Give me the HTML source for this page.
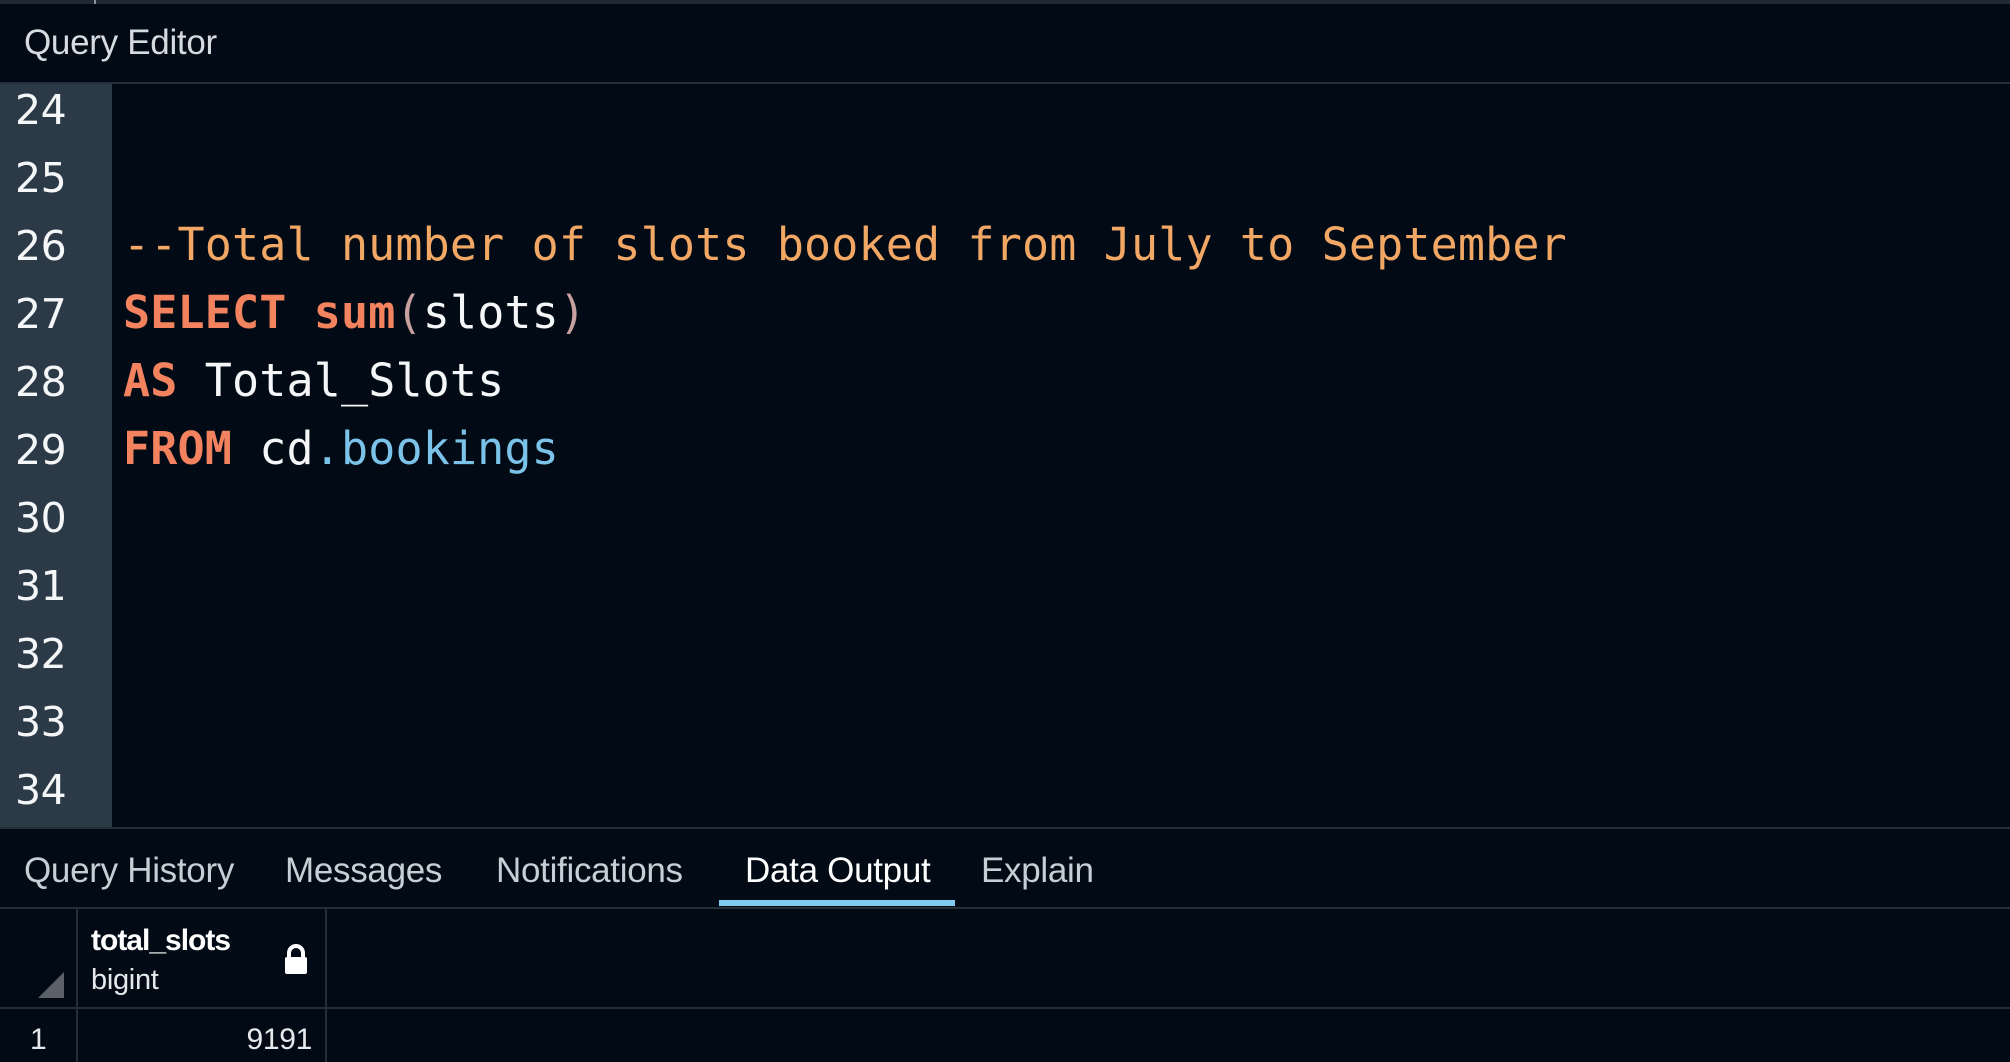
<!DOCTYPE html>
<html><head><meta charset="utf-8"><style>
*{margin:0;padding:0;box-sizing:border-box}
body{width:2010px;height:1062px;background:#020b15;overflow:hidden;position:relative;font-family:"Liberation Sans",sans-serif;color:#dfe3e8}
.abs{position:absolute}
.topbar{left:0;top:0;width:2010px;height:4px;background:#1e2a36}
.hdr{left:24px;top:23px;font-size:35px;color:#d6dbe1;letter-spacing:-0.3px}
.hline{left:0;width:2010px;height:2px;background:#232e39}
.gutter{left:0;top:84px;width:112px;height:743px;background:#2c3a48}
.ln{left:15px;font-family:"DejaVu Sans",sans-serif;font-size:41px;color:#f4f6f8;line-height:68px;letter-spacing:-0.5px}
.code{left:123px;font-family:"DejaVu Sans Mono","Liberation Mono",monospace;font-size:45px;line-height:68px;color:#f4f6f8;white-space:pre;letter-spacing:0.15px}
.cm{color:#f2a765}.kw{color:#f3825e;font-weight:bold}.pa{color:#c9a0a0}.bl{color:#7cc3ea}
.tab{top:851px;font-size:35px;color:#c7ced6;letter-spacing:-0.3px}
</style></head><body>
<div class="abs topbar"></div>
<div class="abs" style="left:94px;top:0;width:2px;height:4px;background:#8a939c"></div>
<div class="abs hdr">Query Editor</div>
<div class="abs hline" style="top:82px"></div>
<div class="abs gutter"></div>
<div class="abs" style="left:0;top:84px;width:2010px;height:743px;overflow:hidden">
<div class="abs ln" style="top:-8px">24<br>25<br>26<br>27<br>28<br>29<br>30<br>31<br>32<br>33<br>34</div>
<div class="abs code" style="top:-9px">

<span class="cm">--Total number of slots booked from July to September</span>
<span class="kw">SELECT</span> <span class="kw">sum</span><span class="pa">(</span>slots<span class="pa">)</span>
<span class="kw">AS</span> Total_Slots
<span class="kw">FROM</span> cd<span class="bl">.bookings</span>
</div>
</div>
<div class="abs hline" style="top:827px"></div>
<div class="abs tab" style="left:24px">Query History</div>
<div class="abs tab" style="left:285px">Messages</div>
<div class="abs tab" style="left:496px">Notifications</div>
<div class="abs tab" style="left:745px;color:#fff">Data Output</div>
<div class="abs tab" style="left:981px">Explain</div>
<div class="abs" style="left:719px;top:900px;width:236px;height:6px;background:#7fcbf0"></div>
<div class="abs hline" style="top:907px"></div>
<div class="abs" style="left:76px;top:908px;width:2px;height:154px;background:#232e39"></div>
<div class="abs" style="left:325px;top:908px;width:2px;height:154px;background:#232e39"></div>
<div class="abs hline" style="top:1007px"></div>
<svg class="abs" style="left:38px;top:972px" width="26" height="26"><polygon points="26,0 26,26 0,26" fill="#5a6168"/></svg>
<div class="abs" style="left:91px;top:924px;font-size:30px;font-weight:bold;color:#fff;letter-spacing:-1px">total_slots</div>
<div class="abs" style="left:91px;top:964px;font-size:29px;color:#e6e9ec;letter-spacing:-0.3px">bigint</div>
<svg class="abs" style="left:282px;top:944px" width="28" height="32" viewBox="0 0 28 32"><path d="M7 14V9a7 7 0 0 1 14 0v5" fill="none" stroke="#fff" stroke-width="4"/><rect x="3" y="13" width="22" height="17" rx="2" fill="#fff"/></svg>
<div class="abs" style="left:30px;top:1023px;font-size:30px;color:#e6e9ec">1</div>
<div class="abs" style="left:200px;width:112px;text-align:right;top:1023px;font-size:30px;color:#e6e9ec;letter-spacing:-0.3px">9191</div>
</body></html>
